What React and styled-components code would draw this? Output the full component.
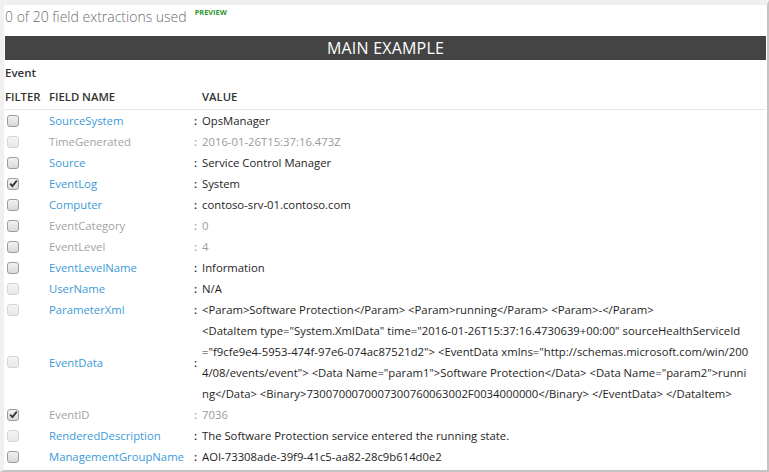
import React from 'react';
import styled, { createGlobalStyle } from 'styled-components';

const GlobalStyle = createGlobalStyle`
  html, body {
    margin: 0;
    padding: 0;
    background: #ffffff;
  }

  body {
    font-family: "Open Sans", "Noto Sans", sans-serif;
  }
`;

const Frame = styled.div`
  box-sizing: border-box;
  width: 769px;
  height: 472px;
  border-top: 5px solid #f0f0f0;
  border-left: 4px solid #f0f0f0;
  border-right: 2px solid #c4c4c4;
  border-bottom: 2px solid #c4c4c4;
  padding: 0 1px 0 1px;
  overflow: hidden;
`;

const Usage = styled.div`
  display: flex;
  align-items: flex-start;
  height: 24px;
  margin-bottom: 7px;
  font-size: 14px;
  line-height: 24px;
  font-weight: 300;
  color: #6e6e6e;
`;

const Preview = styled.span`
  margin-left: 8px;
  margin-top: 1px;
  font-size: 7.4px;
  line-height: 12px;
  font-weight: 700;
  color: #2d9a2d;
`;

const Banner = styled.div`
  height: 24px;
  background: #444444;
  color: #ffffff;
  font-size: 16px;
  line-height: 24px;
  text-align: center;
  letter-spacing: 0.2px;
`;

const Section = styled.div`
  height: 25px;
  font-size: 11.5px;
  line-height: 25px;
  font-weight: 600;
  color: #333333;
`;

const Grid = styled.div`
  display: grid;
  grid-template-columns: 44px 144px 9px 1fr;
  font-size: 11.3px;
`;

const HeadCell = styled.div`
  height: 24px;
  line-height: 24px;
  font-weight: 600;
  color: #333333;
  border-bottom: 1px solid #e6e6e6;
  padding-left: ${(p) => p.$indent || 0}px;
`;

const Cell = styled.div`
  display: flex;
  align-items: center;
  min-height: 21px;
  line-height: 21px;
`;

const BoxCell = styled(Cell)`
  padding-left: 2px;
`;

const Name = styled(Cell)`
  color: ${(p) => (p.$muted ? '#a3a3a3' : '#3b9ad8')};
  white-space: nowrap;
`;

const Colon = styled(Cell)`
  color: ${(p) => (p.$muted ? '#a3a3a3' : '#222222')};
  font-weight: 600;
  padding-left: 1px;
`;

const Value = styled.div`
  display: flex;
  flex-direction: column;
  justify-content: center;
  line-height: 21px;
  color: ${(p) => (p.$muted ? '#9a9a9a' : '#1e1e1e')};
  white-space: nowrap;
`;

const Box = styled.span`
  box-sizing: border-box;
  display: inline-flex;
  align-items: center;
  justify-content: center;
  width: 12px;
  height: 12px;
  border-radius: 3px;
  border: 1px solid ${(p) => (p.$disabled ? '#d4d4d4' : '#9c9c9c')};
  background: ${(p) =>
    p.$disabled
      ? 'linear-gradient(#f4f4f4, #e8e8e8)'
      : 'linear-gradient(#f2f2f2, #d9d9d9)'};
`;

function Checkbox({ checked, disabled }) {
  return (
    <Box $disabled={disabled}>
      {checked && (
        <svg width="9" height="9" viewBox="0 0 9 9">
          <path d="M1.2 4.6 L3.4 7 L7.8 1.6" fill="none" stroke="#333" strokeWidth="1.8" />
        </svg>
      )}
    </Box>
  );
}

const rows = [
  { name: 'SourceSystem', value: ['OpsManager'] },
  { name: 'TimeGenerated', value: ['2016-01-26T15:37:16.473Z'], muted: true, disabled: true },
  { name: 'Source', value: ['Service Control Manager'] },
  { name: 'EventLog', value: ['System'], checked: true },
  { name: 'Computer', value: ['contoso-srv-01.contoso.com'] },
  { name: 'EventCategory', value: ['0'], muted: true },
  { name: 'EventLevel', value: ['4'], muted: true },
  { name: 'EventLevelName', value: ['Information'] },
  { name: 'UserName', value: ['N/A'], disabled: true },
  {
    name: 'ParameterXml',
    value: ['<Param>Software Protection</Param> <Param>running</Param> <Param>-</Param>'],
    disabled: true,
  },
  {
    name: 'EventData',
    value: [
      '<DataItem type="System.XmlData" time="2016-01-26T15:37:16.4730639+00:00" sourceHealthServiceId',
      '="f9cfe9e4-5953-474f-97e6-074ac87521d2"> <EventData xmlns="http://schemas.microsoft.com/win/200',
      '4/08/events/event"> <Data Name="param1">Software Protection</Data> <Data Name="param2">runni',
      'ng</Data> <Binary>7300700070007300760063002F0034000000</Binary> </EventData> </DataItem>',
    ],
    disabled: true,
  },
  { name: 'EventID', value: ['7036'], muted: true, checked: true },
  { name: 'RenderedDescription', value: ['The Software Protection service entered the running state.'], disabled: true },
  { name: 'ManagementGroupName', value: ['AOI-73308ade-39f9-41c5-aa82-28c9b614d0e2'] },
];

export default function App() {
  return (
    <>
      <GlobalStyle />
      <Frame>
        <Usage>
          0 of 20 field extractions used
          <Preview>PREVIEW</Preview>
        </Usage>
        <Banner>MAIN EXAMPLE</Banner>
        <Section>Event</Section>
        <Grid>
          <HeadCell>FILTER</HeadCell>
          <HeadCell>FIELD NAME</HeadCell>
          <HeadCell />
          <HeadCell $indent={-1}>VALUE</HeadCell>
          {rows.map((r) => (
            <React.Fragment key={r.name}>
              <BoxCell>
                <Checkbox checked={r.checked} disabled={r.disabled} />
              </BoxCell>
              <Name $muted={r.muted}>{r.name}</Name>
              <Colon $muted={r.muted}>:</Colon>
              <Value $muted={r.muted}>
                {r.value.map((line) => (
                  <span key={line}>{line}</span>
                ))}
              </Value>
            </React.Fragment>
          ))}
        </Grid>
      </Frame>
    </>
  );
}
